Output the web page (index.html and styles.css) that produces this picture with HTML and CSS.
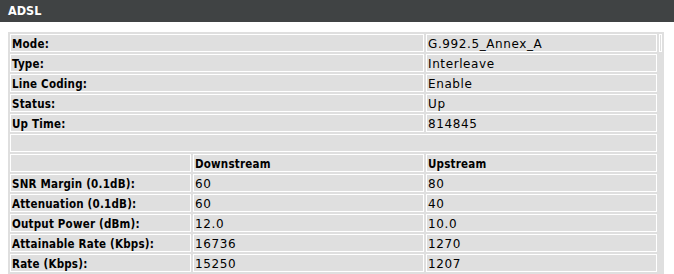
FILE: index.html
```html
<!DOCTYPE html>
<html>
<head>
<meta charset="utf-8">
<link rel="stylesheet" href="styles.css">
</head>
<body>
<div class="titlebar">ADSL</div>
<div class="content">
<table class="info">
  <colgroup>
    <col class="c-label">
    <col class="c-down">
    <col class="c-up">
    <col class="c-edge">
  </colgroup>
  <tr><td class="lbl" colspan="2">Mode:</td><td>G.992.5_Annex_A</td><td></td></tr>
  <tr><td class="lbl" colspan="2">Type:</td><td>Interleave</td></tr>
  <tr><td class="lbl" colspan="2">Line Coding:</td><td>Enable</td></tr>
  <tr><td class="lbl" colspan="2">Status:</td><td>Up</td></tr>
  <tr><td class="lbl" colspan="2">Up Time:</td><td>814845</td></tr>
  <tr><td colspan="3"></td></tr>
  <tr><td></td><td class="lbl">Downstream</td><td class="lbl">Upstream</td></tr>
  <tr><td class="lbl">SNR Margin (0.1dB):</td><td>60</td><td>80</td></tr>
  <tr><td class="lbl">Attenuation (0.1dB):</td><td>60</td><td>40</td></tr>
  <tr><td class="lbl">Output Power (dBm):</td><td>12.0</td><td>10.0</td></tr>
  <tr><td class="lbl">Attainable Rate (Kbps):</td><td>16736</td><td>1270</td></tr>
  <tr><td class="lbl">Rate (Kbps):</td><td>15250</td><td>1207</td></tr>
</table>
</div>
</body>
</html>
```

FILE: styles.css
```css
html, body {
  margin: 0;
  padding: 0;
  background: #ffffff;
}
body {
  font-family: "DejaVu Sans", sans-serif;
  font-size: 12px;
  letter-spacing: 0.6px;
  color: #000;
}
.titlebar {
  height: 22px;
  line-height: 22px;
  background: #404344;
  color: #ffffff;
  font-family: "DejaVu Sans Condensed", "DejaVu Sans", sans-serif;
  font-weight: bold;
  font-size: 12.5px;
  letter-spacing: 0;
  padding-left: 8px;
}
.content {
  padding: 10px 0 0 8px;
}
.info {
  width: 656px;
  table-layout: fixed;
  border-collapse: separate;
  border-spacing: 2px;
  background: #dfdfdf;
}
.c-label { width: 181px; }
.c-down { width: 231px; }
.c-up { width: 231px; }
.c-edge { width: 3px; }
.info td {
  box-sizing: border-box;
  height: 18px;
  padding: 2px 1px 0 1px;
  border: 1px solid #ffffff;
  background: #dfdfdf;
  white-space: nowrap;
  vertical-align: middle;
  line-height: 14px;
}
.info td.lbl {
  font-family: "DejaVu Sans Condensed", "DejaVu Sans", sans-serif;
  font-weight: bold;
  font-size: 11.5px;
  letter-spacing: 0.2px;
}
```
